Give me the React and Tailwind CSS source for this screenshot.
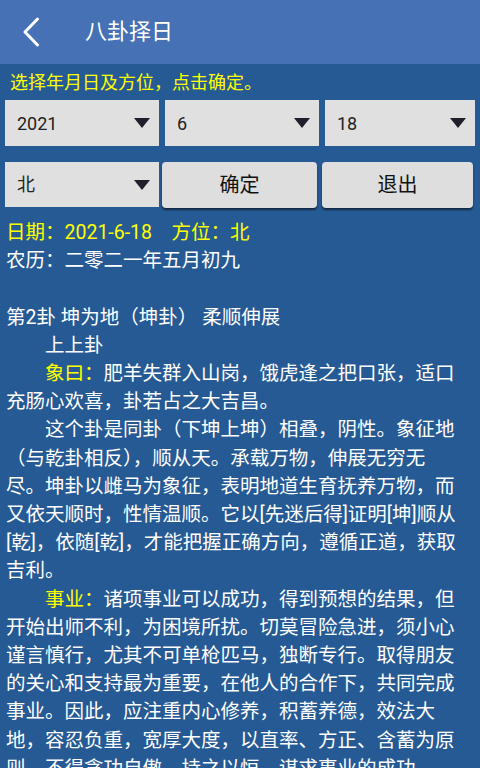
import React from "react";

const Y = ({ children }) => <span className="text-[#ffff00]">{children}</span>;

function Spinner({ value, w }) {
  return (
    <div className={`${w} h-full bg-[#e0e0e0] flex items-center justify-between pl-[12px] pr-[9px]`}>
      <span className="text-[18px] text-[#222222]">{value}</span>
      <svg width="16" height="10" viewBox="0 0 16 10">
        <polygon points="0,0 16,0 8,10" fill="#20202c" />
      </svg>
    </div>
  );
}

function Btn({ label, w }) {
  return (
    <button className={`${w} h-[46px] bg-[#dedede] rounded-[4px] shadow-[0_2px_2px_rgba(0,0,0,0.55)] text-[20px] text-[#111111] flex items-center justify-center`}>
      {label}
    </button>
  );
}

const lines = [
  [<Y key="a">日期：2021-6-18　方位：北</Y>],
  ["农历：二零二一年五月初九"],
  ["\u00a0"],
  ["第2卦 坤为地（坤卦） 柔顺伸展"],
  ["　　上上卦"],
  ["　　", <Y key="b">象曰：</Y>, "肥羊失群入山岗，饿虎逢之把口张，适口"],
  ["充肠心欢喜，卦若占之大吉昌。"],
  ["　　这个卦是同卦（下坤上坤）相叠，阴性。象征地"],
  ["（与乾卦相反），顺从天。承载万物，伸展无穷无"],
  ["尽。坤卦以雌马为象征，表明地道生育抚养万物，而"],
  ["又依天顺时，性情温顺。它以[先迷后得]证明[坤]顺从"],
  ["[乾]，依随[乾]，才能把握正确方向，遵循正道，获取"],
  ["吉利。"],
  ["　　", <Y key="c">事业：</Y>, "诸项事业可以成功，得到预想的结果，但"],
  ["开始出师不利，为困境所扰。切莫冒险急进，须小心"],
  ["谨言慎行，尤其不可单枪匹马，独断专行。取得朋友"],
  ["的关心和支持最为重要，在他人的合作下，共同完成"],
  ["事业。因此，应注重内心修养，积蓄养德，效法大"],
  ["地，容忍负重，宽厚大度，以直率、方正、含蓄为原"],
  ["则，不得贪功自傲，持之以恒，谋求事业的成功。"],
];

export default function App() {
  return (
    <div
      className="w-[480px] h-[768px] overflow-hidden bg-[#265a94]"
      style={{ fontFamily: 'Roboto, "Noto Sans CJK SC", sans-serif' }}
    >
      <header className="h-[64px] bg-[#4671b4] flex items-center">
        <svg className="ml-[22px]" width="18" height="30" viewBox="0 0 18 30">
          <polyline points="15.5,2 3,15 15.5,28" fill="none" stroke="#ffffff" strokeWidth="3" strokeLinecap="round" strokeLinejoin="round" />
        </svg>
        <h1 className="ml-[45px] text-[22px] text-white leading-none">八卦择日</h1>
      </header>

      <p className="pt-[9px] px-[10px] text-[18px] leading-[20px] text-[#ffff00]">选择年月日及方位，点击确定。</p>

      <div className="mt-[7px] px-[5px] h-[46px] flex gap-[6px]">
        <Spinner value="2021" w="w-[154px]" />
        <Spinner value="6" w="w-[154px]" />
        <Spinner value="18" w="w-[150px]" />
      </div>

      <div className="mt-[16px] pl-[5px] h-[46px] flex items-start">
        <div className="h-[45px] flex">
          <Spinner value="北" w="w-[154px]" />
        </div>
        <div className="ml-[3px] flex gap-[5px]">
          <Btn label="确定" w="w-[155px]" />
          <Btn label="退出" w="w-[151px]" />
        </div>
      </div>

      <div className="mt-[11px] pl-[6px] text-[19.5px] leading-[28.2px] text-white whitespace-pre">
        {lines.map((l, i) => (
          <div key={i}>{l}</div>
        ))}
      </div>
    </div>
  );
}
